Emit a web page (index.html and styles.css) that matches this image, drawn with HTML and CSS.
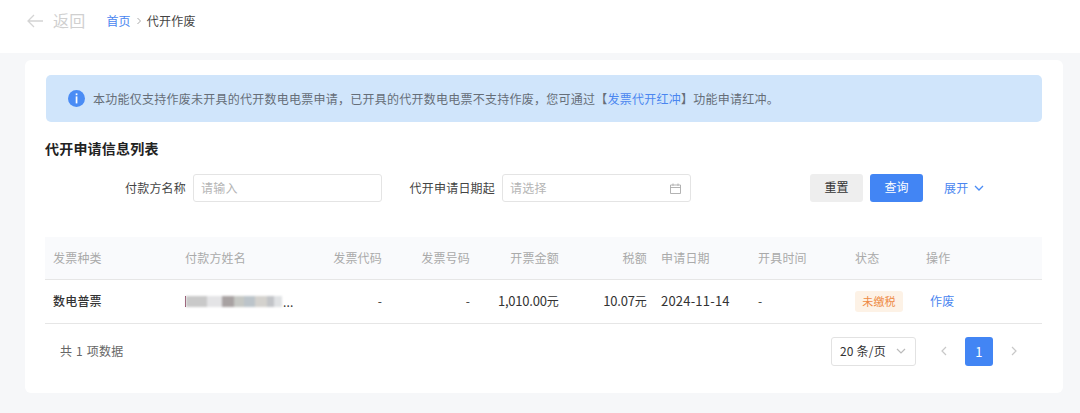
FILE: index.html
```html
<!DOCTYPE html>
<html lang="zh-CN">
<head>
<meta charset="utf-8">
<title>代开作废</title>
<link rel="stylesheet" href="styles.css">
</head>
<body>
<header class="topbar">
  <div class="back">
    <svg class="back-icon" width="16" height="14" viewBox="0 0 16 14"><path d="M7 1 1 7l6 6M1 7h15" fill="none" stroke="#d4d4d4" stroke-width="1.3"/></svg>
    <span>返回</span>
  </div>
  <nav class="crumbs">
    <a class="link">首页</a>
    <svg width="6" height="8" viewBox="0 0 6 8"><path d="m1.5 1 3 3-3 3" fill="none" stroke="#aaa" stroke-width="1"/></svg>
    <span>代开作废</span>
  </nav>
</header>
<main class="main">
  <section class="card">
    <div class="alert">
      <svg class="info" width="17" height="17" viewBox="0 0 17 17"><circle cx="8.5" cy="8.5" r="8.5" fill="#4a8cf5"/><rect x="7.7" y="3.4" width="1.7" height="1.8" fill="#fff"/><rect x="7.7" y="6.4" width="1.7" height="7" fill="#fff"/></svg>
      <p>本功能仅支持作废未开具的代开数电电票申请，已开具的代开数电电票不支持作废，您可通过【<a class="link">发票代开红冲</a>】功能申请红冲。</p>
    </div>
    <h2 class="title">代开申请信息列表</h2>
    <form class="filters">
      <label class="lbl lbl-a">付款方名称</label>
      <div class="input"><span>请输入</span></div>
      <label class="lbl lbl-b">代开申请日期起</label>
      <div class="input"><span>请选择</span>
        <svg width="11" height="11" viewBox="0 0 11 11"><path d="M.5 2h10v8.500H.5zM.5 4.500h10M3 .5v2.300M8 .5v2.300" fill="none" stroke="#aaa" stroke-width=".9"/></svg>
      </div>
      <div class="actions">
        <button type="button" class="btn btn-gray">重置</button>
        <button type="button" class="btn btn-blue">查询</button>
        <a class="link expand">展开
          <svg width="10" height="6" viewBox="0 0 10 6"><path d="m1 1 4 4 4-4" fill="none" stroke="#4a8cf5" stroke-width="1.3"/></svg>
        </a>
      </div>
    </form>
    <table class="grid">
      <colgroup>
        <col class="c1"><col class="c2"><col class="c3"><col class="c4"><col class="c5"><col class="c6"><col class="c7"><col class="c8"><col class="c9"><col class="c10">
      </colgroup>
      <thead>
        <tr>
          <th>发票种类</th><th>付款方姓名</th><th class="r">发票代码</th><th class="r">发票号码</th><th class="r">开票金额</th><th class="r">税额</th><th>申请日期</th><th>开具时间</th><th>状态</th><th>操作</th>
        </tr>
      </thead>
      <tbody>
        <tr>
          <td class="strong">数电普票</td>
          <td><span class="masked"><span class="mask"></span></span><span class="dots">...</span></td>
          <td class="r">-</td>
          <td class="r">-</td>
          <td class="r"><span class="num amt">1,010.00</span>元</td>
          <td class="r"><span class="num amt">10.07</span>元</td>
          <td><span class="num">2024-11-14</span></td>
          <td>-</td>
          <td><span class="tag">未缴税</span></td>
          <td><a class="link op">作废</a></td>
        </tr>
      </tbody>
    </table>
    <footer class="foot">
      <span class="total">共 1 项数据</span>
      <div class="pager">
        <div class="size"><span>20 条/页</span>
          <svg width="10" height="6" viewBox="0 0 10 6"><path d="m1 1 4 4 4-4" fill="none" stroke="#bbb" stroke-width="1.200"/></svg>
        </div>
        <svg class="arrow arrow-l" width="6" height="10" viewBox="0 0 6 10"><path d="M5 1 1 5l4 4" fill="none" stroke="#c8c8c8" stroke-width="1.200"/></svg>
        <span class="page">1</span>
        <svg class="arrow arrow-r" width="6" height="10" viewBox="0 0 6 10"><path d="m1 1 4 4-4 4" fill="none" stroke="#c8c8c8" stroke-width="1.200"/></svg>
      </div>
    </footer>
  </section>
</main>
</body>
</html>
```
FILE: styles.css
```css
* { box-sizing: border-box; }
html, body { margin: 0; height: 100%; }
body {
  width: 1080px;
  height: 413px;
  overflow: hidden;
  background: #f6f7f9;
  color: #333;
  letter-spacing: .2px;
  font: 12px/1.5 "Noto Sans CJK SC", "Liberation Sans", sans-serif;
}
.link { color: #4a86f0; text-decoration: none; }
.topbar {
  height: 53px;
  background: #fff;
  display: flex;
  align-items: flex-start;
  padding: 9px 0 0 27px;
}
.back {
  display: flex;
  align-items: center;
  gap: 10px;
  height: 24px;
  color: #d0d0d0;
  font-size: 16px;
  line-height: 22px;
}
.back span { margin-top: -2px; }
.crumbs {
  display: flex;
  align-items: center;
  gap: 5px;
  height: 24px;
  margin-left: 21px;
  color: #444;
}
.main { padding: 7px 17px 0 25px; }
.card {
  height: 333px;
  background: #fff;
  border-radius: 6px;
  padding: 15px 21px 0 20px;
}
.alert {
  height: 47px;
  margin-left: 1px;
  display: flex;
  align-items: center;
  gap: 8px;
  padding-left: 22px;
  background: #d0e5fb;
  border-radius: 5px;
  color: #666e78;
  letter-spacing: .25px;
}
.alert p { margin: 0; white-space: nowrap; }
.title {
  margin: 16px 0 0;
  font-size: 14px;
  line-height: 20px;
  font-weight: 700;
  color: #222;
}
.filters {
  display: flex;
  align-items: center;
  height: 28px;
  margin-top: 16px;
}
.lbl { color: #444; text-align: right; white-space: nowrap; }
.lbl-a { width: 141px; margin-right: 7px; }
.lbl-b { width: 113px; margin-right: 7px; }
.input {
  width: 189px;
  height: 28px;
  display: flex;
  align-items: center;
  justify-content: space-between;
  padding: 0 9px 0 7px;
  border: 1px solid #e4e4e4;
  border-radius: 3px;
  color: #b5b5b5;
}
.input span { margin-top: -1px; }
.actions {
  display: flex;
  align-items: center;
  gap: 7px;
  margin-left: 119px;
}
.btn {
  width: 53px;
  height: 28px;
  padding: 0 0 2px;
  border: 0;
  border-radius: 3px;
  font: inherit;
}
.btn-gray { background: #eeeeee; color: #333; }
.btn-blue { background: #4285f4; color: #fff; }
.expand {
  display: inline-flex;
  align-items: center;
  gap: 6px;
  margin-left: 14px;
}
.grid {
  width: 997px;
  margin-top: 35px;
  table-layout: fixed;
  border-collapse: collapse;
}
.c1 { width: 132px; }
.c2 { width: 120px; }
.c3 { width: 91px; }
.c4 { width: 88px; }
.c5 { width: 89px; }
.c6 { width: 88px; }
.c7 { width: 97px; }
.c8 { width: 97px; }
.c9 { width: 71px; }
.c10 { width: 124px; }
.grid th, .grid td {
  padding: 0 6px 0 8px;
  text-align: left;
  white-space: nowrap;
  border-bottom: 1px solid #e6e6e6;
}
.grid th {
  height: 42px;
  background: #f9fafc;
  color: #aaa;
  font-weight: 400;
  padding-top: 1px;
}
.grid td { height: 44px; color: #333; }
.grid .r { text-align: right; }
.grid .strong { font-weight: 500; }
.num { font-size: 13px; }
.amt { letter-spacing: -.2px; }
.masked {
  display: inline-block;
  vertical-align: middle;
  margin-right: 1px;
  border-left: 1px solid #8a3a5a;
  line-height: 0;
}
.mask {
  display: inline-block;
  width: 96px;
  height: 11px;
  filter: blur(1px);
  background: linear-gradient(90deg, #c9c9c9 0 22%, #e4e4e6 22% 38%, #a8a2a2 38% 50%, #c6c8c4 50% 60%, #bcc4ca 60% 72%, #d4d2ce 72% 84%, #c2c4c8 84% 92%, #e0e2e4 92%);
}
.dots { vertical-align: middle; }
.tag {
  display: inline-block;
  width: 48px;
  height: 21px;
  line-height: 21px;
  text-align: center;
  border-radius: 3px;
  background: #fdf2e6;
  color: #ee8a45;
  font-size: 11px;
}
.op { margin-left: 4px; }
.foot {
  display: flex;
  align-items: center;
  justify-content: space-between;
  height: 55px;
  padding: 0 25px 0 15px;
}
.total { color: #666; word-spacing: 1px; margin-top: -1px; }
.pager { display: flex; align-items: center; }
.size {
  width: 85px;
  height: 29px;
  display: flex;
  align-items: center;
  justify-content: space-between;
  padding: 0 9px 0 8px;
  border: 1px solid #e2e2e2;
  border-radius: 3px;
  color: #333;
}
.arrow-l { margin-left: 25px; }
.arrow-r { margin-left: 18px; }
.page {
  width: 28px;
  height: 29px;
  margin-left: 18px;
  line-height: 29px;
  text-align: center;
  background: #4285f4;
  border-radius: 3px;
  color: #fff;
  font-size: 13px;
}
```
